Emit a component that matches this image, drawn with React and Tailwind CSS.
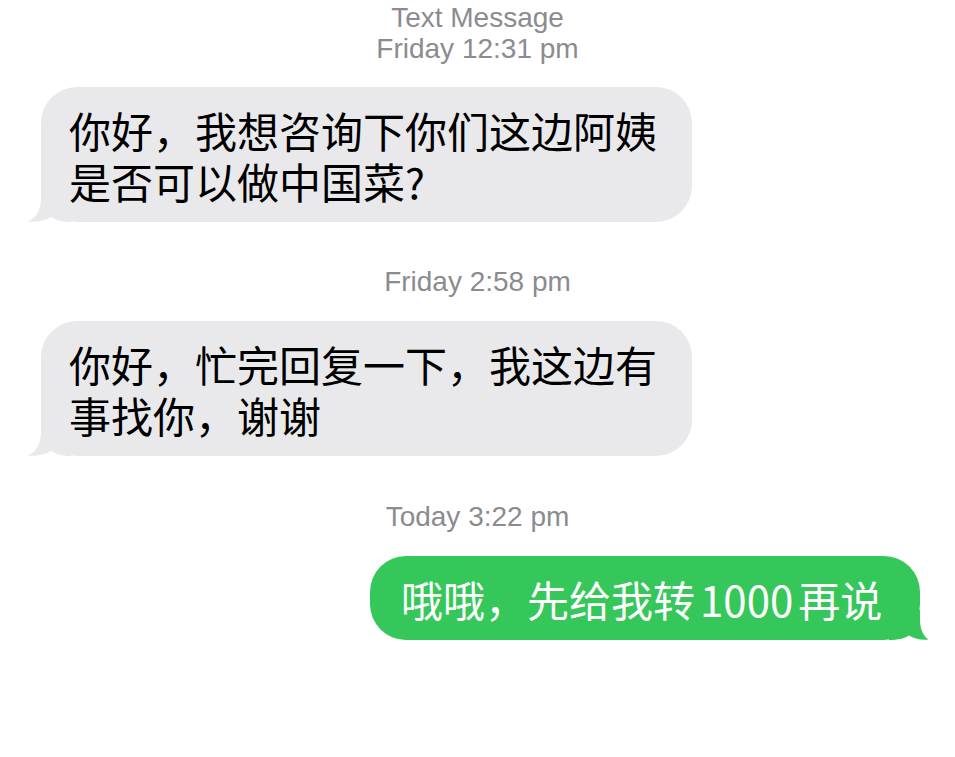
import React from "react";

const cjk = { fontFamily: '"Noto Sans CJK SC", "Noto Sans", sans-serif' };
const latin = { fontFamily: '"Liberation Sans", Arial, sans-serif' };

function Stamp({ children }) {
  return (
    <div
      className="text-center text-[28px] leading-[31px] text-[#8b8b90]"
      style={latin}
    >
      {children}
    </div>
  );
}

function GrayTail() {
  return (
    <svg
      className="absolute left-[-14px] bottom-0"
      width="44"
      height="34"
      viewBox="0 0 44 34"
    >
      <path
        d="M14 0 L14 10 C14 22 9 30 1 33.5 C10 34.5 18 32.5 24 29 C29 32 35 34 44 34 L44 0 Z"
        fill="#e9e9eb"
      />
    </svg>
  );
}

function GreenTail() {
  return (
    <svg
      className="absolute right-[-9px] bottom-0"
      width="40"
      height="30"
      viewBox="0 0 40 30"
    >
      <path
        d="M31 0 L31 9 C31 19 34 26 39.5 29.5 C32 30.5 25 28.5 20 25.5 C15 28.5 9 30 0 30 L0 0 Z"
        fill="#35c75a"
      />
    </svg>
  );
}

function GrayBubble({ children }) {
  return (
    <div className="relative ml-[41px] w-[651px]">
      <GrayTail />
      <div
        className="relative rounded-[36px] bg-[#e9e9eb] pl-[28px] pr-[20px] pt-[17px] pb-[16px] text-[42px] leading-[51px] text-black"
        style={cjk}
      >
        {children}
      </div>
    </div>
  );
}

export default function App() {
  return (
    <div className="w-[955px] h-[757px] bg-white overflow-hidden pt-[2px]">
      <Stamp>Text Message</Stamp>
      <Stamp>Friday 12:31 pm</Stamp>

      <div className="mt-[23px]">
        <GrayBubble>
          你好，我想咨询下你们这边阿姨
          <br />
          是否可以做中国菜?
        </GrayBubble>
      </div>

      <div className="mt-[44px]">
        <Stamp>Friday 2:58 pm</Stamp>
      </div>

      <div className="mt-[24px]">
        <GrayBubble>
          你好，忙完回复一下，我这边有
          <br />
          事找你，谢谢
        </GrayBubble>
      </div>

      <div className="mt-[45px]">
        <Stamp>Today 3:22 pm</Stamp>
      </div>

      <div className="mt-[24px] flex justify-end pr-[35px]">
        <div className="relative w-[550px]">
          <GreenTail />
          <div
            className="relative rounded-[36px] bg-[#35c75a] pl-[31px] pr-[20px] pt-[17px] pb-[16px] text-[42px] leading-[51px] text-white whitespace-nowrap"
            style={cjk}
          >
            哦哦，先给我转<span className="mx-[5px]">1000</span>再说
          </div>
        </div>
      </div>
    </div>
  );
}
